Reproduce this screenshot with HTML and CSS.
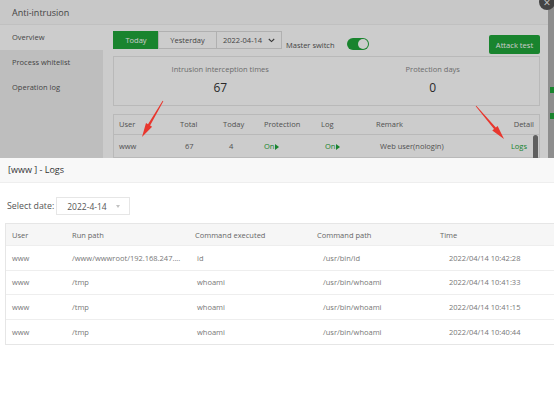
FILE: index.html
```html
<!DOCTYPE html>
<html lang="en">
<head>
  <meta charset="UTF-8">
  <meta name="viewport" content="width=device-width, initial-scale=1.0">
  <title>Anti-intrusion</title>
  <link rel="stylesheet" href="styles.css">
</head>
<body>
  <!-- Underlying panel -->
  <div class="page">
    <div class="panel">
      <header class="panel-header">Anti-intrusion</header>
      <div class="panel-body">
        <nav class="sidebar">
          <a class="active">Overview</a>
          <a>Process whitelist</a>
          <a>Operation log</a>
        </nav>
        <main class="content">
          <div class="toolbar">
            <div class="tabs">
              <span class="tab tab-today active">Today</span>
              <span class="tab tab-yesterday">Yesterday</span>
              <span class="tab tab-date">2022-04-14
                <svg class="chevron" width="7" height="5" viewBox="0 0 7 5"><path d="M0.8 1 L3.5 3.6 L6.2 1" fill="none" stroke="#444" stroke-width="1.1"/></svg>
              </span>
            </div>
            <span class="switch-label">Master switch</span>
            <span class="toggle"><span class="knob"></span></span>
            <button class="attack-btn">Attack test</button>
          </div>

          <div class="stats">
            <div class="stat">
              <p>Intrusion interception times</p>
              <strong>67</strong>
            </div>
            <div class="stat">
              <p>Protection days</p>
              <strong>0</strong>
            </div>
          </div>

          <div class="user-table">
            <div class="row head">
              <span>User</span><span>Total</span><span>Today</span><span>Protection</span><span>Log</span><span>Remark</span><span class="right">Detail</span>
            </div>
            <div class="row data">
              <span>www</span><span>67</span><span>4</span>
              <span class="on">On<i class="play"></i></span>
              <span class="on">On<i class="play"></i></span>
              <span>Web user(nologin)</span>
              <span class="right on">Logs</span>
            </div>
            <span class="scrollbar"></span>
          </div>
        </main>
      </div>
      <span class="close-btn">&times;</span>
    </div>
    <div class="behind">
      <span class="mark"></span>
      <span class="mark"></span>
    </div>
  </div>

  <div class="mask"></div>

  <!-- Annotation arrows -->
  <svg class="arrows" width="554" height="158" viewBox="0 0 554 158">
    <polygon points="163.35,101.2 150.1,125.5 152.1,126.7 142,137 146,123.1 148,124.3 162.65,100.8" fill="#e8372e"/>
    <polygon points="476.3,105.74 495.85,127.55 497.61,126.07 504,139 492.27,130.6 494.03,129.11 475.7,106.26" fill="#e8372e"/>
  </svg>

  <!-- Logs dialog -->
  <div class="modal">
    <div class="modal-title">[www ] - Logs</div>
    <div class="modal-body">
      <div class="date-row">
        <label>Select date:</label>
        <div class="date-select">2022-4-14 <span class="caret"></span></div>
      </div>

      <div class="log-table">
        <div class="log-row log-head">
          <span>User</span><span>Run path</span><span>Command executed</span><span>Command path</span><span>Time</span>
        </div>
        <div class="log-row">
          <span>www</span><span>/www/wwwroot/192.168.247....</span><span>id</span><span>/usr/bin/id</span><span>2022/04/14 10:42:28</span>
        </div>
        <div class="log-row">
          <span>www</span><span>/tmp</span><span>whoami</span><span>/usr/bin/whoami</span><span>2022/04/14 10:41:33</span>
        </div>
        <div class="log-row">
          <span>www</span><span>/tmp</span><span>whoami</span><span>/usr/bin/whoami</span><span>2022/04/14 10:41:15</span>
        </div>
        <div class="log-row">
          <span>www</span><span>/tmp</span><span>whoami</span><span>/usr/bin/whoami</span><span>2022/04/14 10:40:44</span>
        </div>
      </div>
    </div>
  </div>
</body>
</html>
```

FILE: styles.css
```css
/* Base */
* {
  margin: 0;
  padding: 0;
  box-sizing: border-box;
}

body {
  font-family: "Open Sans", Arial, sans-serif;
  font-size: 7.5px;
  color: #555;
  width: 554px;
  height: 395px;
  overflow: hidden;
  position: relative;
  background: #b2b2b2;
}

/* Underlying panel */
.page {
  display: flex;
  height: 395px;
}

.panel {
  width: 548px;
  background: #fff;
  position: relative;
  display: flex;
  flex-direction: column;
}

.panel-header {
  height: 25px;
  line-height: 25px;
  padding-left: 12px;
  font-size: 9px;
  color: #555;
  background: #fafafa;
  border-bottom: 1px solid #f0f0f0;
}

.panel-body {
  flex: 1;
  display: flex;
}

.sidebar {
  width: 103px;
  background: #eee;
  display: flex;
  flex-direction: column;
}

.sidebar a {
  height: 25px;
  line-height: 25px;
  padding-left: 12px;
  color: #555;
}

.sidebar a.active {
  background: #fff;
}

.content {
  flex: 1;
  padding: 6px 8px 0 10px;
}

/* Toolbar */
.toolbar {
  display: flex;
  align-items: flex-start;
}

.tabs {
  display: flex;
}

.tab {
  height: 18px;
  line-height: 16px;
  border: 1px solid #ddd;
  margin-left: -1px;
  color: #555;
  text-align: center;
}

.tab-today {
  width: 46px;
  margin-left: 0;
}

.tab-yesterday {
  width: 59px;
}

.tab-date {
  width: 66px;
  text-align: left;
  padding-left: 6px;
  display: flex;
  align-items: center;
  gap: 6px;
}

.tab.active {
  background: #20a53a;
  border-color: #20a53a;
  color: #fff;
}

.switch-label {
  margin: 8px 0 0 4px;
  line-height: 12px;
}

.toggle {
  margin: 7px 0 0 12px;
  width: 22px;
  height: 12px;
  border-radius: 6px;
  background: #20a53a;
  position: relative;
}

.toggle .knob {
  position: absolute;
  right: 1px;
  top: 1px;
  width: 10px;
  height: 10px;
  border-radius: 50%;
  background: #fff;
}

.attack-btn {
  margin: 4px 0 0 auto;
  width: 51px;
  height: 19px;
  border: none;
  border-radius: 2px;
  background: #20a53a;
  color: #fff;
  font-family: inherit;
  font-size: 7.6px;
}

/* Stats */
.stats {
  margin-top: 2px;
  height: 50px;
  border: 1px solid #e8e8e8;
  display: flex;
}

.stat {
  flex: 1;
  text-align: center;
  padding-top: 7px;
}

.stat p {
  color: #888;
  line-height: 11px;
}

.stat strong {
  display: block;
  margin-top: 5px;
  font-size: 12px;
  font-weight: normal;
  line-height: 16px;
  color: #333;
}

/* User table */
.user-table {
  margin-top: 8px;
  border: 1px solid #e8e8e8;
  position: relative;
}

.row {
  display: grid;
  grid-template-columns: 61px 43px 41px 57px 55px 1fr 60px;
  color: #666;
}

.row span {
  padding: 0 5px;
  white-space: nowrap;
}

.row.head {
  line-height: 19px;
  border-bottom: 1px solid #e8e8e8;
}

.row.data {
  line-height: 22px;
}

.row.data span:nth-child(2) { padding-left: 10px; }
.row.data span:nth-child(3) { padding-left: 11px; }
.row.data span:nth-child(5) { padding-left: 9px; }
.row.data span:nth-child(6) { padding-left: 9px; }
.row.data span:nth-child(7) { padding-right: 12px; }

.row .right {
  text-align: right;
}

.on {
  color: #20a53a;
}

.play {
  display: inline-block;
  margin-left: 1px;
  border-left: 4px solid #20a53a;
  border-top: 3px solid transparent;
  border-bottom: 3px solid transparent;
  vertical-align: -0.5px;
}

.scrollbar {
  position: absolute;
  right: 1px;
  top: 20px;
  width: 5px;
  height: 30px;
  border-radius: 3px;
  background: #777;
}

.close-btn {
  position: absolute;
  left: 539px;
  top: -6px;
  width: 16px;
  height: 16px;
  border-radius: 50%;
  background: #555;
  color: #fff;
  font-size: 12px;
  line-height: 17px;
  text-align: center;
}

/* Page behind the panel */
.behind {
  flex: 1;
  display: flex;
  flex-direction: column;
  gap: 20px;
  padding: 87px 0 0 2px;
}

.behind .mark {
  height: 6px;
  background: #20a53a;
}

/* Overlay */
.mask {
  position: absolute;
  inset: 0;
  background: rgba(0, 0, 0, 0.2);
}

.arrows {
  position: absolute;
  top: 0;
  left: 0;
}

/* Logs dialog */
.modal {
  position: absolute;
  top: 158px;
  left: 0;
  bottom: 0;
  width: 580px;
  background: #fff;
}

.modal-title {
  height: 25px;
  line-height: 24px;
  padding-left: 8px;
  font-size: 9px;
  color: #333;
  background: #f8f8f8;
  border-bottom: 1px solid #eee;
}

.modal-body {
  padding: 14px 0 0 5px;
}

.date-row {
  display: flex;
  align-items: center;
  padding-left: 2px;
}

.date-row label {
  font-size: 8.8px;
  color: #555;
  margin-right: 2px;
}

.date-select {
  width: 74px;
  height: 18px;
  border: 1px solid #e6e6e6;
  display: flex;
  align-items: center;
  padding-left: 10px;
  font-size: 8.5px;
  color: #555;
}

.caret {
  margin: 1px 9px 0 auto;
  border-top: 3px solid #c2c2c2;
  border-left: 2.5px solid transparent;
  border-right: 2.5px solid transparent;
}

.log-table {
  margin-top: 8px;
  width: 560px;
  border: 1px solid #e6e6e6;
}

.log-row {
  display: grid;
  grid-template-columns: 60px 123px 122px 123px 1fr;
  align-items: center;
  height: 24.5px;
  border-bottom: 1px solid #eee;
  color: #777;
}

.log-row:last-child {
  border-bottom: none;
}

.log-row span {
  padding-left: 6px;
  white-space: nowrap;
}

.log-row.log-head {
  height: 22px;
  background: #f6f6f6;
  color: #666;
}

.log-row:not(.log-head) span:nth-child(3) { padding-left: 8px; }
.log-row:not(.log-head) span:nth-child(4) { padding-left: 12px; }
.log-row:not(.log-head) span:nth-child(5) { padding-left: 15px; }
```
